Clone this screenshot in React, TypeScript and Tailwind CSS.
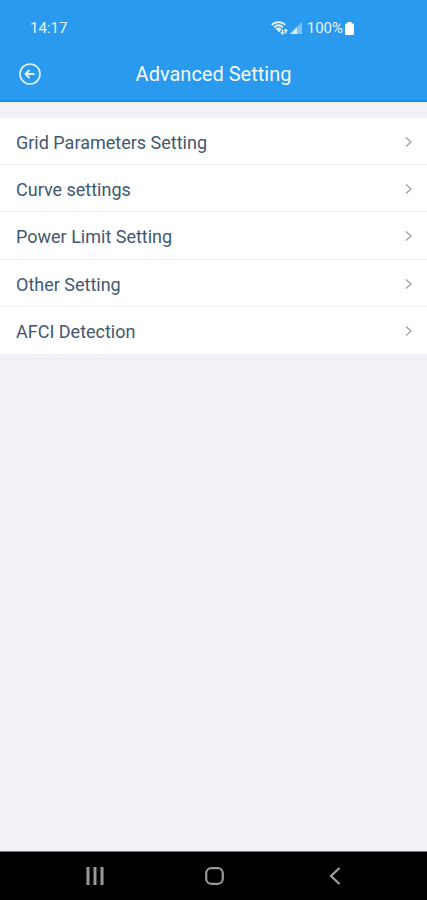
const settings = [
  "Grid Parameters Setting",
  "Curve settings",
  "Power Limit Setting",
  "Other Setting",
  "AFCI Detection",
];

function StatusBar() {
  return (
    <div className="flex h-[46px] items-center pt-[10px] pl-[30px] pr-[73px] text-[15px] leading-5 text-[#e4f3ff]">
      <span>14:17</span>
      <div className="ml-auto flex items-center">
        <svg className="mr-[2px]" width="17" height="14" viewBox="0 0 17 14" fill="none" stroke="currentColor" aria-hidden="true">
          <path d="M.8 4C4.500 .2 10.500 .2 14.200 4" strokeWidth="1.800" />
          <path d="M3.200 6.300C5.800 3.800 9.200 3.800 11.800 6.300" strokeWidth="1.800" />
          <path d="M4.500 7.800C6.500 6.200 8.500 6.200 10.500 7.800L8.500 11.500Z" fill="currentColor" stroke="none" />
          <path d="M11.500 8.500V13M10 11.300L11.500 13L13 11.300M14.800 12.500V8.500M13.300 10L14.800 8.500L16.300 10" strokeWidth="1.300" />
        </svg>
        <svg className="mr-[5px]" width="12" height="12" viewBox="0 0 12 12" fill="currentColor" aria-hidden="true">
          <path d="M0 12L12 0V12Z" opacity=".45" />
          <path d="M0 12L7 5V12Z" opacity=".85" />
        </svg>
        <span>100%</span>
        <svg className="ml-[2px]" width="9" height="13" viewBox="0 0 9 13" fill="#ffffff" aria-hidden="true">
          <path d="M2.500 0h4v1.500H8a1 1 0 0 1 1 1V12a1 1 0 0 1-1 1H1a1 1 0 0 1-1-1V2.500a1 1 0 0 1 1-1h1.500z" />
        </svg>
      </div>
    </div>
  );
}

export default function App() {
  return (
    <div className="flex min-h-screen flex-col bg-[#f0f2f6] font-['Roboto','Liberation_Sans',sans-serif]">
      <header className="border-b-2 border-[#0f8eed] bg-[#2a9aee]">
        <StatusBar />
        <div className="grid h-[54px] grid-cols-[60px_1fr_60px] items-center pt-[2px]">
          <button type="button" aria-label="Back" className="ml-[18px] w-6 text-[#e4f3ff]">
            <svg width="24" height="24" viewBox="0 0 24 24" fill="none" stroke="currentColor" strokeWidth="1.600" aria-hidden="true">
              <circle cx="12" cy="12" r="10" />
              <path d="M16.500 12H8M11.500 8L7.500 12L11.500 16" strokeWidth="1.800" />
            </svg>
          </button>
          <h1 className="text-center text-xl leading-6 text-[#f4faff]">Advanced Setting</h1>
        </div>
      </header>
      <main className="flex-1 pt-4">
        <ul className="grid h-[236px] grid-rows-5 divide-y divide-[#f0f2f5] bg-white">
          {settings.map((name) => (
            <li key={name} className="flex">
              <button type="button" className="flex flex-1 items-center justify-between px-4 pt-[2px] text-left text-lg leading-6 text-[#3f5870]">
                <span className="pt-[2px]">{name}</span>
                <svg width="7" height="10" viewBox="0 0 7 10" className="mr-[-1px]" fill="none" stroke="#a0a3a8" strokeWidth="1.400" aria-hidden="true">
                  <path d="M1 .5L6 5L1 9.500" />
                </svg>
              </button>
            </li>
          ))}
        </ul>
      </main>
      <nav className="grid h-[49px] grid-cols-[1fr_120px_120px_1fr] items-center border-t border-[#777777] bg-black text-[#999999]">
        <button type="button" aria-label="Recent apps" className="mr-[-10px] justify-self-end">
          <svg width="18" height="18" viewBox="0 0 18 18" fill="none" stroke="currentColor" strokeWidth="3" aria-hidden="true">
            <path d="M2 0V18M9 0V18M16 0V18" />
          </svg>
        </button>
        <button type="button" aria-label="Home" className="mr-[-10px] justify-self-end">
          <svg width="19" height="18" viewBox="0 0 19 18" fill="none" stroke="currentColor" strokeWidth="2.200" aria-hidden="true">
            <rect x="1.200" y="1.200" width="16.600" height="15.600" rx="5" />
          </svg>
        </button>
        <button type="button" aria-label="Navigate back" className="mr-[-7px] justify-self-end">
          <svg width="12" height="18" viewBox="0 0 12 18" fill="none" stroke="currentColor" strokeWidth="2.400" aria-hidden="true">
            <path d="M10.500 1L2 9L10.500 17" />
          </svg>
        </button>
      </nav>
    </div>
  );
}
